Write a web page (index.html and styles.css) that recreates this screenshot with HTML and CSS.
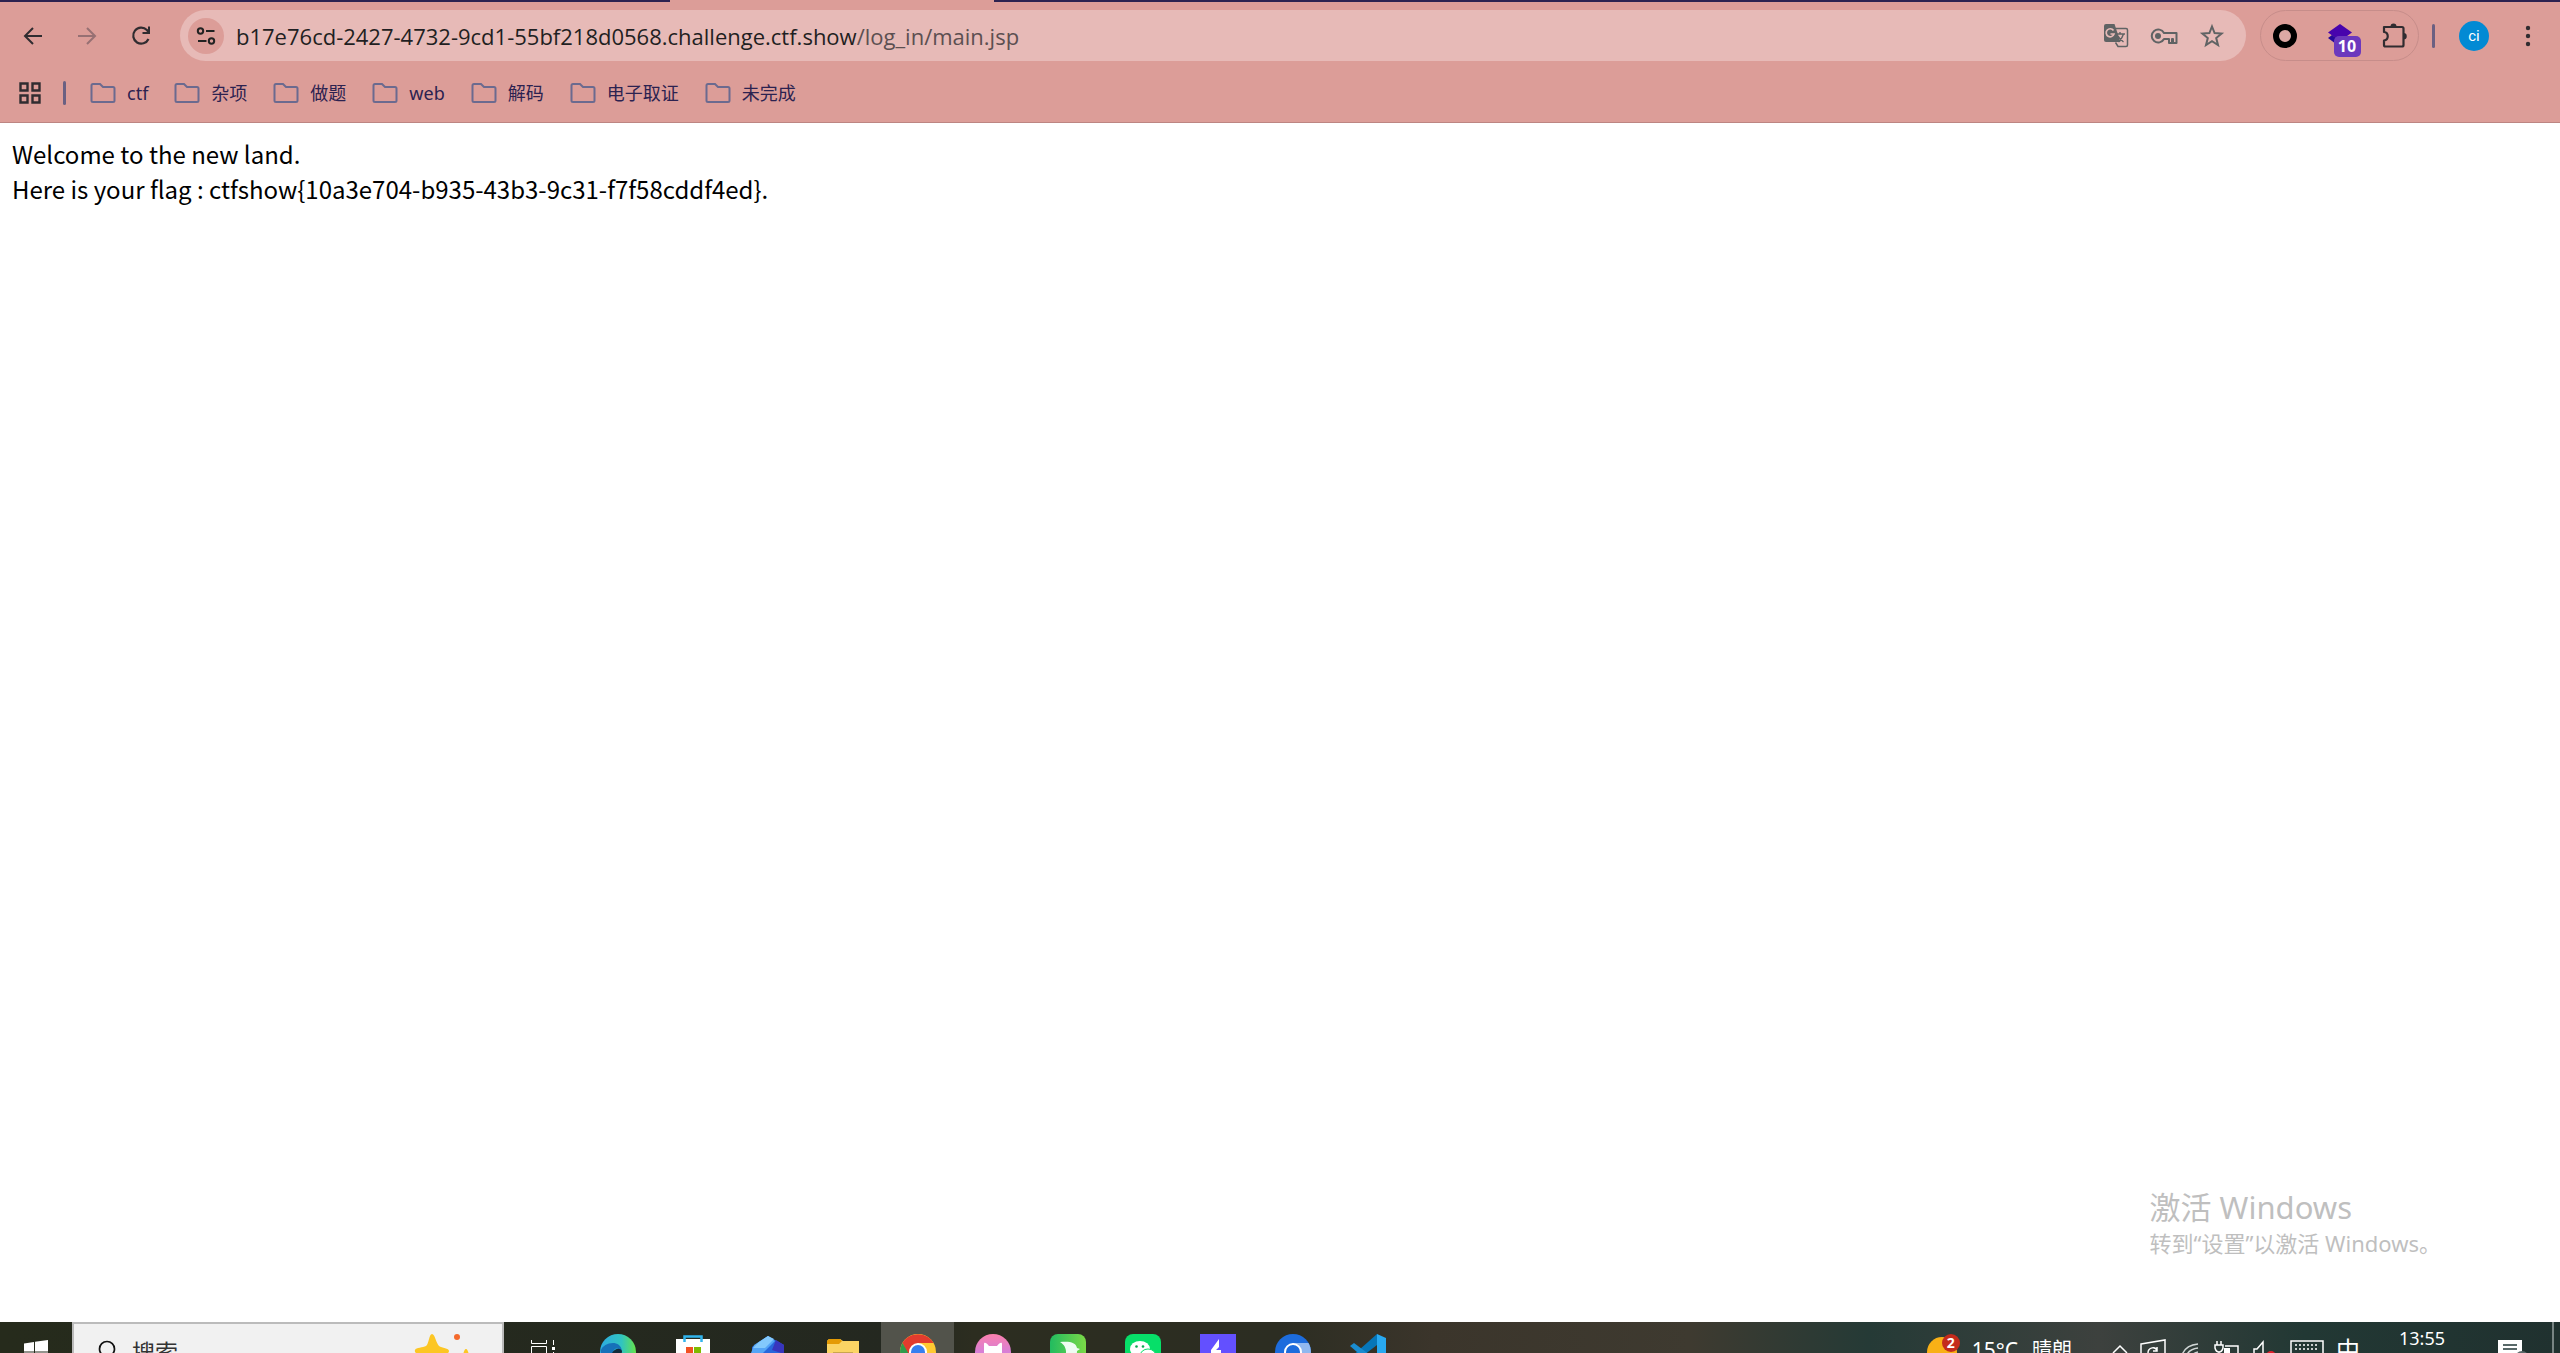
FILE: index.html
```html
<!DOCTYPE html>
<html lang="zh-CN">
<head>
  <meta charset="UTF-8">
  <title>main.jsp</title>
  <link rel="stylesheet" href="styles.css">
</head>
<body>
  <header class="browser">
    <div class="tab-strip"><span class="tab-active"></span></div>

    <div class="toolbar">
      <nav class="nav-buttons">
        <button aria-label="后退"><svg width="24" height="24" viewBox="0 0 24 24"><path d="M21 12H4M12 4l-8 8 8 8" fill="none" stroke="#302c30" stroke-width="2"/></svg></button>
        <button aria-label="前进" disabled><svg width="24" height="24" viewBox="0 0 24 24"><path d="M3 12h17M12 4l8 8-8 8" fill="none" stroke="#977073" stroke-width="2"/></svg></button>
        <button aria-label="刷新"><svg width="24" height="24" viewBox="0 0 24 24"><path d="M19.5 15a8 8 0 1 1-1.6-9l1.6 2" fill="none" stroke="#302c30" stroke-width="2.2"/><path d="M21 2.5V10h-7.500V8H19V2.500z" fill="#302c30"/></svg></button>
      </nav>

      <div class="address-bar">
        <button class="site-info" aria-label="网站信息"><svg width="20" height="20" viewBox="0 0 20 20"><g fill="none" stroke="#222" stroke-width="2"><circle cx="4.5" cy="5" r="2.7"/><circle cx="15.5" cy="15" r="2.7"/><path d="M10 5h8.500M2 15h8.500"/></g></svg></button>
        <a class="url" href="#">b17e76cd-2427-4732-9cd1-55bf218d0568.challenge.ctf.show<span class="url-path">/log_in/main.jsp</span></a>
        <div class="address-actions">
          <button aria-label="翻译"><svg width="28" height="28" viewBox="0 0 28 28"><path d="M13 6.500h11a1.500 1.500 0 0 1 1.500 1.500v15a1.500 1.500 0 0 1-1.500 1.500h-8l-2.500-4" fill="none" stroke="#606364" stroke-width="1.5"/><path d="M4 2h8.500l6 18H4a2 2 0 0 1-2-2V4a2 2 0 0 1 2-2z" fill="#606364"/><path d="M11.500 8.500A4 4 0 1 0 12 12H8.500" fill="none" stroke="#e7bab7" stroke-width="1.7"/><path d="M14 12h9M18 10v2M21.500 12c-1 4-3 6-5 8M16 14c1 2 3 4 5.500 6" fill="none" stroke="#606364" stroke-width="1.4"/></svg></button>
          <button aria-label="密码"><svg width="28" height="28" viewBox="0 0 28 28"><path d="M14 11a6.500 6.500 0 1 0 0 6h5v4h3v-4h1v4h3.500V11z" fill="none" stroke="#606364" stroke-width="2" stroke-linejoin="round"/><circle cx="8" cy="14" r="3" fill="#606364"/></svg></button>
          <button aria-label="收藏"><svg width="28" height="28" viewBox="0 0 28 28"><path d="M14 4.500l2.600 6.600 7 .5-5.400 4.500 1.800 6.900-6-3.800L8 23l1.800-6.900-5.400-4.500 7-.5z" fill="none" stroke="#606364" stroke-width="2"/></svg></button>
        </div>
      </div>

      <div class="extensions">
        <button aria-label="扩展一"><svg width="28" height="28" viewBox="0 0 28 28"><circle cx="14" cy="14" r="9" fill="#dca8a4" stroke="#000" stroke-width="6"/></svg></button>
        <button class="with-badge" aria-label="扩展二"><svg width="28" height="28" viewBox="0 0 28 28"><path d="M14 2l12 8.500L14 19 2 10.500z" fill="#4804ad"/><path d="M2 16l4-3 8 6v6z" fill="#27089b"/></svg><span class="badge">10</span></button>
        <button aria-label="扩展程序"><svg width="28" height="28" viewBox="0 0 28 28"><path d="M4 5h18a1.500 1.500 0 0 1 1.500 1.500V23a1.500 1.500 0 0 1-1.500 1.500H5.500A1.500 1.500 0 0 1 4 23v-4.500c5-.5 5-8 0-8.500z" fill="none" stroke="#302c30" stroke-width="2.2" stroke-linejoin="round"/><path d="M10.500 4.500a3 3 0 0 1 6 0zM23.500 11a3 3 0 0 1 0 6.500z" fill="#302c30"/></svg></button>
      </div>
      <span class="divider"></span>
      <button class="profile">ci</button>
      <button class="menu" aria-label="菜单"><svg width="8" height="24" viewBox="0 0 8 24"><g fill="#302c30"><circle cx="4" cy="4" r="2.2"/><circle cx="4" cy="12" r="2.2"/><circle cx="4" cy="20" r="2.2"/></g></svg></button>
    </div>

    <nav class="bookmarks">
      <button class="apps" aria-label="应用"><svg width="22" height="22" viewBox="0 0 22 22"><path d="M1.500 1.500h7v7h-7zM13.500 1.500h7v7h-7zM1.500 13.500h7v7h-7zM13.500 13.500h7v7h-7z" fill="none" stroke="#302c30" stroke-width="2.4"/></svg></button>
      <span class="divider"></span>
      <a href="#"><svg class="folder" width="26" height="22" viewBox="0 0 26 22"><path d="M3 2h7l3 3h10a1.500 1.500 0 0 1 1.500 1.500V18.500A1.500 1.500 0 0 1 23 20H3a1.500 1.500 0 0 1-1.500-1.500v-15A1.500 1.500 0 0 1 3 2z"/></svg>ctf</a>
      <a href="#"><svg class="folder" width="26" height="22" viewBox="0 0 26 22"><path d="M3 2h7l3 3h10a1.500 1.500 0 0 1 1.500 1.500V18.500A1.500 1.500 0 0 1 23 20H3a1.500 1.500 0 0 1-1.500-1.500v-15A1.500 1.500 0 0 1 3 2z"/></svg>杂项</a>
      <a href="#"><svg class="folder" width="26" height="22" viewBox="0 0 26 22"><path d="M3 2h7l3 3h10a1.500 1.500 0 0 1 1.500 1.500V18.500A1.500 1.500 0 0 1 23 20H3a1.500 1.500 0 0 1-1.500-1.500v-15A1.500 1.500 0 0 1 3 2z"/></svg>做题</a>
      <a href="#"><svg class="folder" width="26" height="22" viewBox="0 0 26 22"><path d="M3 2h7l3 3h10a1.500 1.500 0 0 1 1.500 1.500V18.500A1.500 1.500 0 0 1 23 20H3a1.500 1.500 0 0 1-1.500-1.500v-15A1.500 1.500 0 0 1 3 2z"/></svg>web</a>
      <a href="#"><svg class="folder" width="26" height="22" viewBox="0 0 26 22"><path d="M3 2h7l3 3h10a1.500 1.500 0 0 1 1.500 1.500V18.500A1.500 1.500 0 0 1 23 20H3a1.500 1.500 0 0 1-1.500-1.500v-15A1.500 1.500 0 0 1 3 2z"/></svg>解码</a>
      <a href="#"><svg class="folder" width="26" height="22" viewBox="0 0 26 22"><path d="M3 2h7l3 3h10a1.500 1.500 0 0 1 1.500 1.500V18.500A1.500 1.500 0 0 1 23 20H3a1.500 1.500 0 0 1-1.500-1.500v-15A1.500 1.500 0 0 1 3 2z"/></svg>电子取证</a>
      <a href="#"><svg class="folder" width="26" height="22" viewBox="0 0 26 22"><path d="M3 2h7l3 3h10a1.500 1.500 0 0 1 1.500 1.500V18.500A1.500 1.500 0 0 1 23 20H3a1.500 1.500 0 0 1-1.500-1.500v-15A1.500 1.500 0 0 1 3 2z"/></svg>未完成</a>
    </nav>
  </header>

  <main class="page">
    Welcome to the new land.<br>
    Here is your flag : ctfshow{10a3e704-b935-43b3-9c31-f7f58cddf4ed}.
  </main>

  <aside class="watermark">
    <p class="watermark-title">激活 Windows</p>
    <p class="watermark-text">转到“设置”以激活 Windows。</p>
  </aside>

  <footer class="taskbar">
    <button class="start" aria-label="开始"><svg width="24" height="24" viewBox="0 0 24 24"><path d="M0 3.500L10 2v9.500H0zM11 1.800L24 0v11.500H11zM0 12.500h10V22l-10-1.500zM11 12.500h13V24l-13-1.800z" fill="#fff"/></svg></button>
    <label class="search">
      <svg class="search-icon" width="24" height="24" viewBox="0 0 24 24"><circle cx="11" cy="9" r="7.5" fill="none" stroke="#111" stroke-width="1.7"/><path d="M5.500 15L0 22" stroke="#111" stroke-width="1.7"/></svg>
      <input type="text" placeholder="搜索" aria-label="搜索">
      <svg width="60" height="40" viewBox="0 0 60 40"><path d="M20 2c3 0 4 9 7 12 3 2 10 2 10 5s-6 5-7 9 0 10-3 10-5-4-8-4-7 4-9 3 0-8-2-12-6-4-5-7 8-2 11-4 3-12 6-12z" fill="#fcc624"/><circle cx="45" cy="5" r="3" fill="#f56a2c"/><path d="M54 17c2 0 2 5 4 6s2 3 0 4-2 6-4 6-2-5-4-6-2-3 0-4 2-6 4-6z" fill="#fcc624"/></svg>
    </label>
    <div class="apps-row">
      <button aria-label="任务视图"><svg width="36" height="36" viewBox="0 0 36 36"><g fill="none" stroke="#fff"><path d="M6.500 6v3.500h15V6M6.500 30V12.500h15V30M28.500 6v5M28.500 18v12"/></g><path d="M27 13h3v3h-3z" fill="#fff"/></svg></button>
      <button aria-label="Edge"><svg width="36" height="36" viewBox="0 0 36 36"><defs><linearGradient id="edge"><stop offset="0" stop-color="#2caae2"/><stop offset=".6" stop-color="#31c4c0"/><stop offset="1" stop-color="#65e34b"/></linearGradient></defs><circle cx="18" cy="18" r="18" fill="url(#edge)"/><path d="M1 16C3 9 20 4 22 17c-6-6-11-1-9 8 1 5 4 9 7 11C7 36 0 28 1 16z" fill="#1671b9"/><path d="M12 19c2-4 8-6 10-2l-1 9-6 6z" fill="#122b3b"/></svg></button>
      <button aria-label="Microsoft Store"><svg width="36" height="36" viewBox="0 0 36 36"><path d="M1 5h34v28H1z" fill="#fff"/><path d="M9.500 8V2.500h17V8" fill="none" stroke="#31b4ed" stroke-width="2.5"/><path d="M11 13h7v7h-7z" fill="#f25022"/><path d="M19 13h7v7h-7z" fill="#7fba00"/></svg></button>
      <button aria-label="工具"><svg width="36" height="36" viewBox="0 0 36 36"><path d="M18 2l16 9v16l-16 8-16-9V13z" fill="#2867dc"/><path d="M18 2L4 11l-3 8h12l12-12z" fill="#54a5f6"/><path d="M9 8l9-6 6 3-9 9H3z" fill="#83c9fc"/><path d="M26 6l8 5v9L22 16z" fill="#3835bd"/></svg></button>
      <button aria-label="文件资源管理器"><svg width="36" height="36" viewBox="0 0 36 36"><path d="M2 30V7l2-2h11l3 2h16v23z" fill="#fbd464"/><path d="M2 10V7l2-2h11l2 2-3 3H2z" fill="#e49a04"/><path d="M8 20v-2h20v2" fill="#caa64e"/></svg></button>
      <button class="active" aria-label="Chrome"><svg width="36" height="36" viewBox="0 0 36 36"><circle cx="18" cy="18" r="18" fill="#ffc932"/><path d="M2.500 9a18 18 0 0 1 31 0H18l-9 14z" fill="#e23b2e"/><path d="M2.500 9L10 22l8 14A18 18 0 0 1 2.500 9z" fill="#2e9b4c"/><circle cx="18" cy="18" r="9" fill="#fff"/><circle cx="18" cy="18" r="7" fill="#367ff0"/></svg></button>
      <button aria-label="猫"><svg width="36" height="36" viewBox="0 0 36 36"><defs><linearGradient id="cat" x2="0" y2="1"><stop offset="0" stop-color="#fb80ad"/><stop offset="1" stop-color="#b37dff"/></linearGradient></defs><circle cx="18" cy="18" r="18" fill="url(#cat)"/><path d="M9 24V10c0-2 2-2 5 2h8c3-4 5-4 5-2v14z" fill="#fff"/></svg></button>
      <button aria-label="飞鸟"><svg width="36" height="36" viewBox="0 0 36 36"><defs><linearGradient id="bird"><stop offset="0" stop-color="#22bb60"/><stop offset="1" stop-color="#7ad947"/></linearGradient></defs><rect width="36" height="36" rx="8" fill="url(#bird)"/><path d="M10 8c9-1 16 0 17 6l3 1-3 2c0 7-5 10-14 9 4-5 5-13-3-18z" fill="#eefcf2"/></svg></button>
      <button aria-label="微信"><svg width="36" height="36" viewBox="0 0 36 36"><rect width="36" height="36" rx="8" fill="#07df69"/><ellipse cx="15" cy="15" rx="10" ry="8" fill="#fff"/><ellipse cx="23" cy="22" rx="8" ry="7" fill="#fff" stroke="#07df69"/><g fill="#07a94f"><circle cx="11.5" cy="12.5" r="1.3"/><circle cx="18" cy="12.5" r="1.3"/><circle cx="20.5" cy="20" r="1"/><circle cx="26" cy="20" r="1"/></g></svg></button>
      <button aria-label="Burp"><svg width="36" height="36" viewBox="0 0 36 36"><path d="M0 0h36v36H0z" fill="#6350ff"/><path d="M19 5v8l-3 3h5v3h-3v12h-3V19h-4v-3z" fill="#fff"/></svg></button>
      <button aria-label="Chromium"><svg width="36" height="36" viewBox="0 0 36 36"><circle cx="18" cy="18" r="18" fill="#1d6cdd"/><path d="M18 9h15.500A18 18 0 0 1 18 36z" fill="#91b8ef"/><circle cx="18" cy="18" r="8" fill="#1d6cdd" stroke="#fff" stroke-width="2"/></svg></button>
      <button aria-label="VS Code"><svg width="36" height="36" viewBox="0 0 36 36"><path d="M27 0v11L5 28l-5-4z" fill="#0676b9"/><path d="M0 12l4-3 24 18v9z" fill="#1a8cd0"/><path d="M27 0l9 4v28l-9 4z" fill="#28a9f1"/></svg></button>
    </div>

    <div class="tray">
      <button class="weather"><span class="sun"><svg width="32" height="32" viewBox="0 0 32 32"><circle cx="16" cy="18" r="15" fill="#f9b016"/></svg><span class="count">2</span></span><span>15°C</span><span class="sky">晴朗</span></button>
      <button aria-label="显示隐藏的图标"><svg width="16" height="24" viewBox="0 0 16 24"><path d="M1 15l7-7 7 7" fill="none" stroke="#fff" stroke-width="1.5"/></svg></button>
      <button aria-label="更新"><svg width="26" height="24" viewBox="0 0 26 24"><path d="M1 6l24-4v21H1zM8 15c0-6 8-7 9-2M17 9v4h-4" fill="none" stroke="#fff" stroke-width="1.5"/></svg></button>
      <button aria-label="网络"><svg width="24" height="24" viewBox="0 0 24 24"><g fill="none" stroke="#d0d6d5" stroke-width="1.5"><path d="M3 22C4 12 10 7 20 6M8 22c0-7 4-11 12-12M13 22c0-4 2-7 7-8"/></g></svg></button>
      <button aria-label="电源"><svg width="26" height="24" viewBox="0 0 26 24"><path d="M3 3v4M7 3v4M1 7h8v3q-1 4-4 4t-4-4zM5 14v8M11 8h13v14H8" fill="none" stroke="#fff" stroke-width="1.5"/><path d="M10 10h6v12h-6z" fill="#fff"/></svg></button>
      <button aria-label="音量"><svg width="26" height="24" viewBox="0 0 26 24"><path d="M2 23V11h3l6-7v20" fill="none" stroke="#fff" stroke-width="1.5"/><circle cx="19" cy="18" r="5" fill="#e0202b"/></svg></button>
      <button aria-label="触摸键盘"><svg width="34" height="24" viewBox="0 0 34 24"><path d="M1 3h32v20H1z" fill="none" stroke="#fff" stroke-width="1.5"/><path d="M5 7h24M5 11h24" stroke="#fff" stroke-width="1.5" stroke-dasharray="2 2"/></svg></button>
      <button class="ime">中</button>
      <time class="clock">13:55</time>
      <button class="notice" aria-label="通知"><svg width="30" height="28" viewBox="0 0 30 28"><path d="M0 2h24v20H12l-6 5v-5H0z" fill="#fff"/><path d="M5 7h14M5 11h14" stroke="#223737" stroke-width="1.5"/><circle cx="24" cy="20" r="7" fill="#59696a"/></svg></button>
      <span class="show-desktop"></span>
    </div>
  </footer>
</body>
</html>
```

FILE: styles.css
```css
* { box-sizing: border-box; }
body { margin: 0; height: 100vh; display: flex; flex-direction: column; overflow: hidden; background: #fff; font-family: "Noto Sans", "Noto Sans CJK SC", sans-serif; }
button { display: flex; align-items: center; justify-content: center; padding: 0; border: 0; background: none; font: inherit; color: inherit; }
a { color: inherit; text-decoration: none; }
p { margin: 0; }
svg { display: block; flex: none; }

/* browser */
.browser { flex: none; background: #dc9d98; border-bottom: 1px solid #bd8582; }
.tab-strip { height: 2px; background: #2c2250; padding-left: 670px; }
.tab-active { display: block; width: 324px; height: 2px; background: #dc9d98; }
.toolbar { display: flex; align-items: center; height: 69px; padding: 0 28px 2px 21px; }
.nav-buttons { display: flex; gap: 30px; margin-right: 27px; }
.nav-buttons button { width: 24px; height: 24px; }
.address-bar { flex: 1; display: flex; align-items: center; height: 51px; padding: 0 20px 0 8px; border-radius: 26px; background: #e7bab7; }
.site-info { width: 36px; height: 36px; border-radius: 50%; background: #dc9d98; }
.url { flex: 1; margin-left: 12px; font-family: "Open Sans", sans-serif; font-size: 22px; line-height: 30px; color: #1f1f22; }
.url-path { color: #5c4f51; }
.address-actions { display: flex; gap: 20px; }
.extensions { display: flex; align-items: center; justify-content: space-between; width: 159px; height: 51px; margin-left: 14px; padding: 0 10px; border: 1px solid #c78d8a; border-radius: 26px; }
.with-badge { position: relative; }
.badge { position: absolute; left: 8px; top: 14px; width: 27px; height: 21px; border-radius: 5px; background: #6c38bd; color: #fff; font-weight: bold; font-size: 16px; line-height: 21px; }
.divider { flex: none; width: 3px; height: 24px; border-radius: 2px; background: #6b6082; }
.toolbar > .divider { margin-left: 13px; }
.profile { width: 30px; height: 30px; margin-left: 24px; border-radius: 50%; background: #028ad4; color: #fff; font: 15px Roboto, sans-serif; }
.menu { margin-left: 35px; }
.bookmarks { display: flex; align-items: center; height: 51px; padding: 0 19px 8px; color: #2c2250; font-size: 18px; line-height: 26px; }
.bookmarks .divider { margin: 0 24px 0 22px; }
.bookmarks a { display: flex; align-items: center; gap: 11px; margin-right: 26px; }
.folder path { fill: none; stroke: #6b6a8f; stroke-width: 2; }

.page { flex: 1; padding: 13px 12px; font: 24px/35px "Noto Sans CJK SC", sans-serif; color: #000; }

/* sits over the page, like the system overlay */
.watermark { position: absolute; right: 119px; bottom: 94px; color: #bfbfbf; }
.watermark-title { font-size: 31px; line-height: 40px; }
.watermark-text { font-size: 22px; line-height: 32px; }

/* taskbar: its lower part runs below the window */
.taskbar { flex: none; display: flex; align-items: flex-start; height: 31px; overflow: hidden; color: #fff; background: linear-gradient(90deg, #262b1c 0%, #242820 35%, #2c2d20 38%, #2c2d22 50%, #3b352b 56%, #3e3a30 66%, #253a36 73%, #3d413e 82%, #223834 90%, #20312f 100%); }
.start { width: 72px; height: 60px; }
.search { display: flex; align-items: flex-start; width: 432px; height: 60px; padding: 8px 30px 0 22px; border: 2px solid #bbb; background: #f1f1f1; }
.search-icon { margin-top: 8px; }
.search input { flex: 1; min-width: 0; margin: 5px 0 0 12px; padding: 0; border: 0; background: none; font: 23px/28px "Noto Sans CJK SC", sans-serif; }
.search input::placeholder { color: #333; opacity: 1; }
.apps-row { display: flex; gap: 2px; padding-left: 2px; }
.apps-row button { width: 73px; height: 60px; }
.apps-row .active { background: #52534b; }
.tray { display: flex; align-items: flex-start; margin-left: auto; }
.tray > button { margin: 16px 6px 0; }
.tray .weather { gap: 14px; margin: 12px 34px 0 0; font-size: 21px; line-height: 32px; }
.sky { font-size: 20px; }
.sun { position: relative; }
.count { position: absolute; right: -2px; top: 0; width: 18px; height: 18px; border-radius: 50%; background: #c42b1c; font-size: 14px; font-weight: bold; line-height: 18px; }
.tray .ime { margin-top: 12px; font-size: 24px; line-height: 32px; }
.clock { margin: 4px 0 0 33px; font-size: 18px; line-height: 24px; }
.tray .notice { margin: 16px 24px 0 53px; }
.show-desktop { width: 8px; height: 60px; border-left: 2px solid #788483; }
```
